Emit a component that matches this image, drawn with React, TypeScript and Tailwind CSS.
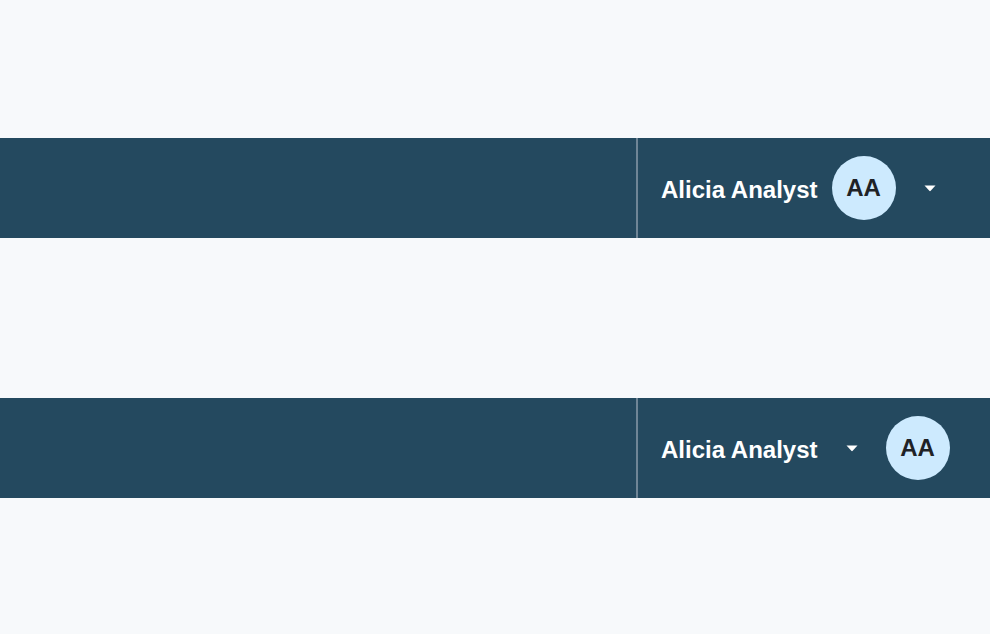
import React from 'react';

type Variant = 'avatar-first' | 'caret-first';

const Caret: React.FC = () => (
  <svg width="12" height="7" viewBox="0 0 12 7" className="block">
    <path d="M0.5 0.5 H11.5 L6.7 5.8 Q6 6.5 5.3 5.8 Z" fill="#ffffff" />
  </svg>
);

const Avatar: React.FC<{ initials: string }> = ({ initials }) => (
  <div className="w-16 h-16 rounded-full bg-[#cdeafe] flex items-center justify-center text-[24px] font-bold text-[#1f2226] leading-none">
    {initials}
  </div>
);

const HeaderBar: React.FC<{ variant: Variant }> = ({ variant }) => (
  <div className="h-[100px] bg-[#24495f] flex">
    <div className="flex-1" />
    <div
      className={`w-[354px] h-full border-l-2 border-[#6f8596] flex items-center pl-[23px] ${
        variant === 'avatar-first' ? 'pr-[54px]' : 'pr-10'
      }`}
    >
      <span className="text-white text-[24px] font-bold leading-none whitespace-nowrap pt-[4px]">
        Alicia Analyst
      </span>
      {variant === 'avatar-first' ? (
        <>
          <div className="ml-[14px]">
            <Avatar initials="AA" />
          </div>
          <button className="ml-7 pt-px">
            <Caret />
          </button>
        </>
      ) : (
        <>
          <button className="ml-7 pt-px">
            <Caret />
          </button>
          <div className="ml-7">
            <Avatar initials="AA" />
          </div>
        </>
      )}
    </div>
  </div>
);

export default function App() {
  return (
    <div
      className="w-[990px] h-[634px] bg-[#f7f9fb] flex flex-col"
      style={{ fontFamily: '"Liberation Sans", Arial, sans-serif' }}
    >
      <div className="h-[138px]" />
      <HeaderBar variant="avatar-first" />
      <div className="h-[160px]" />
      <HeaderBar variant="caret-first" />
    </div>
  );
}
